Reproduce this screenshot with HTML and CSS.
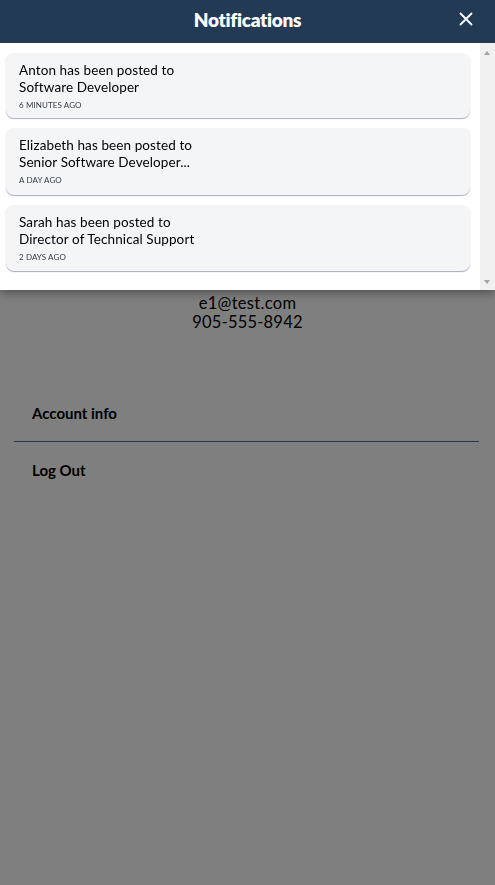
FILE: index.html
```html
<!DOCTYPE html>
<html lang="en">
<head>
<meta charset="utf-8">
<title>Profile</title>
<link rel="stylesheet" href="styles.css">
</head>
<body>
<main class="page">
  <section class="contact">
    <div class="email">e1@test.com</div>
    <div class="phone">905-555-8942</div>
  </section>
  <nav class="menu">
    <a class="menu-item">Account info</a>
    <a class="menu-item">Log Out</a>
  </nav>
</main>

<div class="overlay"></div>

<div class="panel">
  <header class="panel-head">
    <h1>Notifications</h1>
    <button class="close" aria-label="Close">
      <svg width="14" height="14" viewBox="0 0 14 14"><path d="M1.5 1.5 L12.5 12.5 M12.5 1.5 L1.5 12.5" stroke="#fff" stroke-width="1.8" stroke-linecap="round"/></svg>
    </button>
  </header>
  <div class="panel-body">
    <ul class="list">
      <li class="card">
        <p class="msg">Anton has been posted to<br>Software Developer</p>
        <p class="time">6 MINUTES AGO</p>
      </li>
      <li class="card">
        <p class="msg">Elizabeth has been posted to<br>Senior Software Developer...</p>
        <p class="time">A DAY AGO</p>
      </li>
      <li class="card">
        <p class="msg">Sarah has been posted to<br>Director of Technical Support</p>
        <p class="time">2 DAYS AGO</p>
      </li>
    </ul>
    <div class="scrollbar">
      <span class="arrow up"></span>
      <span class="arrow down"></span>
    </div>
  </div>
</div>
</body>
</html>
```
FILE: styles.css
```css
* { box-sizing: border-box; }
html, body { margin: 0; padding: 0; }
body {
  font-family: "Lato", "Open Sans", sans-serif;
  background: #ffffff;
  color: #000;
  width: 495px;
  height: 885px;
  overflow: hidden;
}
.page {
  padding-top: 294px;
}
.contact {
  text-align: center;
  color: #000;
}
.email { font-size: 16.5px; line-height: 18px; letter-spacing: 0.3px; }
.phone { font-size: 16.5px; line-height: 20px; letter-spacing: 0.2px; }
.menu {
  margin: 53px 16px 0 14px;
  display: flex;
  flex-direction: column;
}
.menu-item {
  display: block;
  padding: 0 18px;
  line-height: 56px;
  font-size: 15px;
  font-weight: 700;
  color: #000;
}
.menu-item:first-child { border-bottom: 1px solid #56689f; }
.overlay {
  position: fixed;
  inset: 0;
  background: rgba(0, 0, 0, 0.5);
}
.panel {
  position: fixed;
  top: 0; left: 0; right: 0;
  background: #fff;
  box-shadow: 0 2px 10px rgba(0,0,0,0.45);
}
.panel-head {
  height: 43px;
  background: #233a55;
  display: flex;
  align-items: center;
  justify-content: center;
  position: relative;
}
.panel-head h1 {
  margin: 0 0 4px;
  color: #fff;
  font-size: 19px;
  font-weight: 800;
  letter-spacing: -0.3px;
  line-height: 1;
}
.close {
  position: absolute;
  right: 22px;
  top: 12px;
  width: 14px;
  height: 14px;
  padding: 0;
  border: 0;
  background: none;
  display: flex;
}
.panel-body {
  display: flex;
  height: 247px;
}
.list {
  list-style: none;
  margin: 0;
  padding: 10px 10px 0 6px;
  flex: 1;
  display: flex;
  flex-direction: column;
  gap: 10px;
}
.card {
  background: #f4f5f7;
  border-radius: 8px;
  box-shadow: 0 1px 1px 0 rgba(60, 70, 110, 0.45);
  padding: 9px 12px 6px 13px;
  height: 65px;
}
.msg {
  margin: 0;
  font-size: 13.5px;
  line-height: 17px;
  color: #000;
  letter-spacing: 0.1px;
}
.time {
  margin: 4px 0 0;
  font-size: 8px;
  line-height: 10px;
  color: #333a48;
  letter-spacing: 0.1px;
}
.card:nth-child(1) { height: 65px; }
.card:nth-child(2) { height: 67px; }
.card:nth-child(3) { height: 66px; }
.scrollbar {
  width: 15px;
  background: #f1f1f1;
  position: relative;
}
.arrow {
  position: absolute;
  left: 4px;
  width: 0; height: 0;
  border-left: 3.5px solid transparent;
  border-right: 3.5px solid transparent;
}
.arrow.up { top: 8px; border-bottom: 4px solid #a3a3a3; }
.arrow.down { bottom: 6px; border-top: 4px solid #a3a3a3; }
```
